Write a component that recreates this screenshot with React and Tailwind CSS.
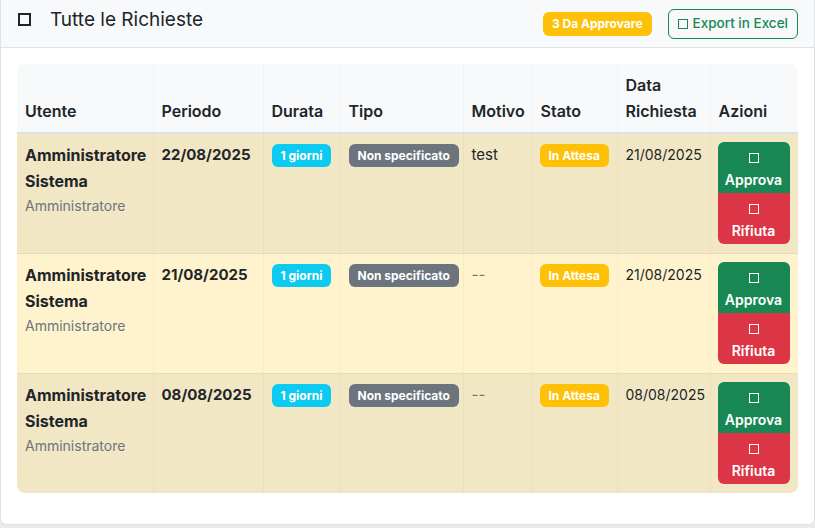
import React from "react";

const rows = [
  { periodo: "22/08/2025", motivo: "test", data: "21/08/2025", striped: true },
  { periodo: "21/08/2025", motivo: "--", data: "21/08/2025", striped: false },
  { periodo: "08/08/2025", motivo: "--", data: "08/08/2025", striped: true },
];

const Box = ({ className }) => (
  <span className={"inline-block border-[1.5px] " + className}></span>
);

const Badge = ({ children, className }) => (
  <span
    className={
      "inline-flex items-center whitespace-nowrap h-[23px] px-[9px] rounded-md text-[12px] font-bold leading-none text-white " +
      className
    }
  >
    {children}
  </span>
);

export default function App() {
  return (
    <div
      className="min-h-screen bg-[#e9ecef] text-[#212529]"
      style={{ fontFamily: "Inter, 'Noto Sans', sans-serif" }}
    >
      <div className="bg-white border-x border-b border-[#dee2e6] rounded-b-md">
        {/* Header */}
        <div className="h-[48px] bg-[#f8f9fa] border-b border-[#dee2e6] px-4 flex items-center justify-between">
          <div className="flex items-center mb-2">
            <span className="inline-block w-[13px] h-[13px] border-2 border-[#212529] ml-[1px] mr-[19px]"></span>
            <h5 className="text-[19px] leading-tight font-normal">Tutte le Richieste</h5>
          </div>
          <div className="flex items-center gap-4">
            <span className="inline-flex items-center h-[24px] px-[9px] rounded-md bg-[#ffc107] text-white text-[12px] font-bold">
              3 Da Approvare
            </span>
            <button className="h-[30px] px-[9px] rounded-md border border-[#198754] text-[#198754] text-[13.5px] font-medium flex items-center gap-[5px]">
              <Box className="w-[10px] h-[10px] border-[#198754]" />
              Export in Excel
            </button>
          </div>
        </div>

        {/* Body */}
        <div className="p-4 pb-[31px]">
          <div className="rounded-lg overflow-hidden">
            <table className="w-full table-fixed border-collapse text-[15px]">
              <colgroup>
                <col className="w-[136px]" />
                <col className="w-[110px]" />
                <col className="w-[77px]" />
                <col className="w-[123px]" />
                <col className="w-[69px]" />
                <col className="w-[85px]" />
                <col className="w-[93px]" />
                <col className="w-[88px]" />
              </colgroup>
              <thead>
                <tr className="bg-[#f8f9fa] border-b-2 border-[#dee2e6]">
                  {["Utente", "Periodo", "Durata", "Tipo", "Motivo", "Stato", "Data Richiesta", "Azioni"].map((h) => (
                    <th
                      key={h}
                      className="px-2 pt-2 pb-[8px] h-[67px] align-bottom text-left text-[16px] font-semibold leading-[26px] border-r border-black/[0.03] last:border-r-0"
                    >
                      {h}
                    </th>
                  ))}
                </tr>
              </thead>
              <tbody>
                {rows.map((r, i) => (
                  <tr
                    key={i}
                    className={
                      (r.striped ? "bg-[#f2e7c4]" : "bg-[#fff3cd]") +
                      " border-b border-[#e6dbb5] last:border-b-0"
                    }
                  >
                    <td className="px-2 py-2 align-top border-r border-black/[0.03]">
                      <div className="font-bold text-[16px] leading-[26px]">Amministratore Sistema</div>
                      <div className="text-[14px] text-[#6c757d] leading-[24px]">Amministratore</div>
                    </td>
                    <td className="px-2 py-2 align-top font-bold leading-[26px] border-r border-black/[0.03]">
                      {r.periodo}
                    </td>
                    <td className="px-2 py-2 align-top border-r border-black/[0.03]">
                      <Badge className="bg-[#0dcaf0] mt-[2px]">1 giorni</Badge>
                    </td>
                    <td className="px-2 py-2 align-top border-r border-black/[0.03]">
                      <Badge className="bg-[#6c757d] mt-[2px]">Non specificato</Badge>
                    </td>
                    <td
                      className={
                        "px-2 py-2 align-top leading-[26px] border-r border-black/[0.03] " +
                        (r.motivo === "--" ? "text-[#6c757d]" : "")
                      }
                    >
                      {r.motivo}
                    </td>
                    <td className="px-2 py-2 align-top border-r border-black/[0.03]">
                      <Badge className="bg-[#ffc107] mt-[2px] -ml-[1px]">In Attesa</Badge>
                    </td>
                    <td className="px-2 py-2 align-top text-[14px] leading-[26px] border-r border-black/[0.03]">
                      {r.data}
                    </td>
                    <td className="px-2 pt-2 pb-[9px] align-top">
                      <div className="flex flex-col w-[72px] -ml-[1px] rounded-md overflow-hidden text-white text-[14px] font-semibold">
                        <button className="h-[51px] bg-[#198754] flex flex-col items-center pt-[11px] gap-[8px]">
                          <Box className="w-[10px] h-[10px] border-white" />
                          <span className="leading-[18px]">Approva</span>
                        </button>
                        <button className="h-[51px] bg-[#dc3545] flex flex-col items-center pt-[11px] gap-[8px]">
                          <Box className="w-[10px] h-[10px] border-white" />
                          <span className="leading-[18px]">Rifiuta</span>
                        </button>
                      </div>
                    </td>
                  </tr>
                ))}
              </tbody>
            </table>
          </div>
        </div>
      </div>
    </div>
  );
}
